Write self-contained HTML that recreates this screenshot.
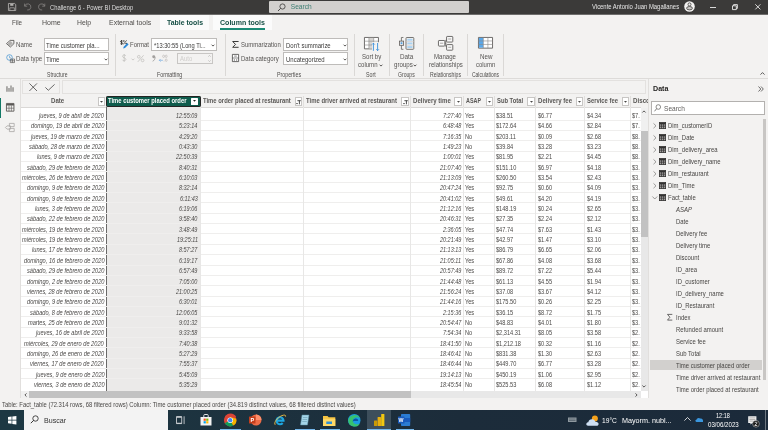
<!DOCTYPE html>
<html><head><meta charset="utf-8">
<style>
*{box-sizing:border-box;margin:0;padding:0}
html,body{width:768px;height:430px;overflow:hidden;background:#f3f2f1;font-family:"Liberation Sans",sans-serif;color:#252423}
.a{position:absolute}
.t{position:absolute;white-space:nowrap;line-height:1;transform-origin:0 0}
svg{position:absolute;overflow:visible}
</style></head><body><div id="root" style="position:absolute;left:0;top:0;width:768px;height:430px;will-change:transform">
<div class="a" style="left:0;top:0;width:768px;height:14px;background:#3b3a39"></div>
<div class="a" style="left:0;top:14px;width:768px;height:1px;background:#6e6d6c"></div>
<svg style="left:7.8px;top:2.9px" width="8.2" height="8" viewBox="0 0 8.2 8"><path d="M0.45 0.45h6.2l1.1 1.1v6H0.45z" fill="none" stroke="#b3b1af" stroke-width="0.85"/><rect x="2.2" y="0.9" width="3.2" height="1.9" fill="#b3b1af"/><path d="M1.8 7.5V4.8h4.6v2.7" fill="none" stroke="#b3b1af" stroke-width="0.7"/></svg>
<svg style="left:23.8px;top:3px" width="7.4" height="7.4" viewBox="0 0 7.4 7.4"><path d="M0.6 0.6v2.6h2.6 M0.8 3.1A3.1 3.1 0 1 1 3.2 7" fill="none" stroke="#8a8886" stroke-width="0.75"/></svg>
<svg style="left:38.3px;top:3px" width="7.4" height="7.4" viewBox="0 0 7.4 7.4"><path d="M6.8 0.6v2.6H4.2 M6.6 3.1A3.1 3.1 0 1 0 4.2 7" fill="none" stroke="#8a8886" stroke-width="0.75"/></svg>
<div class="t" style="left:50.00px;top:4.81px;font-size:6.6px;color:#dcdcdc;transform:scaleX(0.8867);">Challenge 6 - Power BI Desktop</div>
<div class="a" style="left:268.8px;top:1px;width:200px;height:12px;background:#d2d0ce;border-radius:1px"></div>
<svg style="left:277px;top:3px" width="9" height="9" viewBox="0 0 9 9"><circle cx="5.5" cy="3.5" r="2.6" fill="none" stroke="#3b3a39" stroke-width="0.8"/><path d="M3.6 5.4L1 8" stroke="#3b3a39" stroke-width="0.9"/></svg>
<div class="t" style="left:290.80px;top:4.01px;font-size:6.6px;color:#3c7d72;">Search</div>
<div class="t" style="left:591.70px;top:4.00px;font-size:6.5px;color:#e8e8e8;transform:scaleX(0.9071);">Vicente Antonio Juan Magallanes</div>
<svg style="left:684.3px;top:1.3px" width="11" height="11" viewBox="0 0 11 11"><circle cx="5.5" cy="5.5" r="5.3" fill="#f3f2f1"/><circle cx="5.5" cy="3.4" r="1.5" fill="none" stroke="#3b3a39" stroke-width="0.8"/><ellipse cx="5.5" cy="7.2" rx="2.9" ry="1.7" fill="#c8c6c4" stroke="#3b3a39" stroke-width="0.8"/></svg>
<div class="a" style="left:710.3px;top:7.1px;width:5.8px;height:0.9px;background:#d8d8d8"></div>
<svg style="left:732.4px;top:4px" width="6" height="6" viewBox="0 0 6 6"><path d="M0.5 1.8h3.8v3.8H0.5z M1.6 1.8V0.6h3.8v3.8H4.3" fill="none" stroke="#fff" stroke-width="0.8"/></svg>
<svg style="left:755px;top:4.3px" width="6" height="6" viewBox="0 0 6 6"><path d="M0.3 0.3L5.4 5.4 M5.4 0.3L0.3 5.4" stroke="#fff" stroke-width="0.8"/></svg>
<div class="a" style="left:160px;top:15px;width:49px;height:14.7px;background:#fbfbfb"></div>
<div class="a" style="left:212.5px;top:15px;width:59.5px;height:14.7px;background:#fbfbfb"></div>
<div class="t" style="left:11.70px;top:20.21px;font-size:6.6px;color:#4f4d4b;transform:scaleX(0.9506);">File</div>
<div class="t" style="left:41.80px;top:20.21px;font-size:6.6px;color:#4f4d4b;transform:scaleX(1.0629);">Home</div>
<div class="t" style="left:76.90px;top:20.21px;font-size:6.6px;color:#4f4d4b;transform:scaleX(1.0396);">Help</div>
<div class="t" style="left:108.60px;top:20.21px;font-size:6.6px;color:#4f4d4b;transform:scaleX(1.0562);">External tools</div>
<div class="t" style="left:167.00px;top:20.20px;font-size:6.5px;color:#164f45;font-weight:700;transform:scaleX(1.0642);">Table tools</div>
<div class="t" style="left:220.00px;top:20.20px;font-size:6.5px;color:#164f45;font-weight:700;transform:scaleX(1.0835);">Column tools</div>
<div class="a" style="left:220px;top:28.4px;width:45px;height:1.3px;background:#1b8a75"></div>
<div class="a" style="left:0;top:78.1px;width:768px;height:0.9px;background:#dddbd9"></div>
<div class="a" style="left:114.6px;top:33.5px;width:0.7px;height:42px;background:#dad8d6"></div>
<div class="a" style="left:225.2px;top:33.5px;width:0.7px;height:42px;background:#dad8d6"></div>
<div class="a" style="left:353.7px;top:33.5px;width:0.7px;height:42px;background:#dad8d6"></div>
<div class="a" style="left:388.5px;top:33.5px;width:0.7px;height:42px;background:#dad8d6"></div>
<div class="a" style="left:423.3px;top:33.5px;width:0.7px;height:42px;background:#dad8d6"></div>
<div class="a" style="left:467.4px;top:33.5px;width:0.7px;height:42px;background:#dad8d6"></div>
<div class="a" style="left:503.1px;top:33.5px;width:0.7px;height:42px;background:#dad8d6"></div>
<div class="t" style="left:46.90px;top:71.67px;font-size:6.3px;color:#4f4d4b;transform:scaleX(0.8059);">Structure</div>
<div class="t" style="left:156.90px;top:71.67px;font-size:6.3px;color:#4f4d4b;transform:scaleX(0.8403);">Formatting</div>
<div class="t" style="left:277.00px;top:71.67px;font-size:6.3px;color:#4f4d4b;transform:scaleX(0.8396);">Properties</div>
<div class="t" style="left:366.25px;top:71.67px;font-size:6.3px;color:#4f4d4b;transform:scaleX(0.8432);">Sort</div>
<div class="t" style="left:398.30px;top:71.67px;font-size:6.3px;color:#4f4d4b;transform:scaleX(0.8085);">Groups</div>
<div class="t" style="left:429.80px;top:71.67px;font-size:6.3px;color:#4f4d4b;transform:scaleX(0.8198);">Relationships</div>
<div class="t" style="left:471.90px;top:71.67px;font-size:6.3px;color:#4f4d4b;transform:scaleX(0.7898);">Calculations</div>
<svg style="left:5.8px;top:40.2px" width="8.4" height="7.4" viewBox="0 0 8.4 7.4"><path d="M0.5 3.6L4.2 0.4H7.9V3.7L4.4 7z" fill="none" stroke="#3b3a39" stroke-width="0.75"/><path d="M2 3.1l2.6 2.5 M3.1 2.1l2.6 2.5 M4.2 1.1l2.6 2.5 M2.4 4.6l2.6-2.5 M3.5 5.6l2.6-2.5" stroke="#5a5856" stroke-width="0.45"/></svg>
<div class="t" style="left:15.60px;top:41.91px;font-size:6.6px;color:#565452;transform:scaleX(0.9321);">Name</div>
<svg style="left:6px;top:54px" width="9" height="9" viewBox="0 0 9 9"><circle cx="3.5" cy="3.5" r="2.8" fill="none" stroke="#3b8fd1" stroke-width="0.7"/><path d="M3.5 1.8v1.9h1.3" fill="none" stroke="#3b8fd1" stroke-width="0.6"/><path d="M4.3 5h4.2v3.6H4.3z M4.3 6.8h4.2 M6.4 5v3.6" fill="none" stroke="#484644" stroke-width="0.6"/></svg>
<div class="t" style="left:15.60px;top:56.21px;font-size:6.6px;color:#565452;transform:scaleX(0.9315);">Data type</div>
<div class="a" style="left:44.2px;top:38.2px;width:64.8px;height:12.6px;background:#fff;border:0.75px solid #bebcba"></div>
<div class="t" style="left:46.40px;top:42.61px;font-size:6.6px;color:#3b3a39;transform:scaleX(0.9011);">Time customer pla...</div>
<div class="a" style="left:44.2px;top:52.1px;width:64.8px;height:12.5px;background:#fff;border:0.75px solid #bebcba"></div>
<div class="t" style="left:46.40px;top:56.51px;font-size:6.6px;color:#3b3a39;transform:scaleX(0.9361);">Time</div>
<svg style="left:103.5px;top:57.6px" width="4" height="3" viewBox="0 0 4 3"><path d="M0.6 0.7L2 2.1 3.4 0.7" fill="none" stroke="#484644" stroke-width="0.9"/></svg>
<svg style="left:119.6px;top:40.4px" width="9" height="9" viewBox="0 0 9 9"><path d="M2.6 1.1C2.1 0.6 0.5 0.6 0.5 1.6 0.5 2.6 2.7 2.3 2.7 3.4 2.7 4.3 1 4.3 0.4 3.7 M1.55 0v4.8" fill="none" stroke="#252423" stroke-width="0.75"/><path d="M3.4 4.4L6.6 0.3" stroke="#252423" stroke-width="0.7"/><circle cx="3.9" cy="1.1" r="0.75" fill="#252423"/><circle cx="6.1" cy="3.6" r="0.75" fill="#252423"/><path d="M3.2 8.4l0.5-1.7 3.6-3.6 1.3 1.3-3.6 3.6z" fill="#2b88d8"/></svg>
<div class="t" style="left:130.00px;top:41.91px;font-size:6.6px;color:#565452;transform:scaleX(0.9095);">Format</div>
<div class="a" style="left:151.4px;top:38.2px;width:65.2px;height:12.6px;background:#fff;border:0.75px solid #bebcba"></div>
<div class="t" style="left:153.80px;top:42.71px;font-size:6.6px;color:#3b3a39;transform:scaleX(0.8671);">*13:30:55 (Long Ti...</div>
<svg style="left:211px;top:43.6px" width="4" height="3" viewBox="0 0 4 3"><path d="M0.6 0.7L2 2.1 3.4 0.7" fill="none" stroke="#484644" stroke-width="0.9"/></svg>
<svg style="left:121.8px;top:54.4px" width="4.4" height="7.8" viewBox="0 0 4.4 7.8"><path d="M3.9 1.9C3.6 1.2 2.9 1 2.2 1 1.2 1 0.5 1.6 0.5 2.3 0.5 4 3.9 3.6 3.9 5.4 3.9 6.2 3.1 6.8 2.1 6.8 1.3 6.8 0.6 6.5 0.4 5.8 M2.2 0v7.8" fill="none" stroke="#c0bebc" stroke-width="0.75"/></svg>
<svg style="left:131px;top:58.3px" width="4" height="3" viewBox="0 0 4 3"><path d="M0.6 0.7L2 2.1 3.4 0.7" fill="none" stroke="#c8c6c4" stroke-width="0.9"/></svg>
<svg style="left:137.3px;top:54.8px" width="7.4" height="7.2" viewBox="0 0 7.4 7.2"><circle cx="1.8" cy="1.8" r="1.35" fill="none" stroke="#c0bebc" stroke-width="0.75"/><circle cx="5.6" cy="5.4" r="1.35" fill="none" stroke="#c0bebc" stroke-width="0.75"/><path d="M6.6 0.3L0.8 6.9" stroke="#c0bebc" stroke-width="0.75"/></svg>
<svg style="left:151.6px;top:55.3px" width="3.6" height="6.4" viewBox="0 0 3.6 6.4"><circle cx="1.7" cy="1.7" r="1.45" fill="#a19f9d"/><path d="M3.1 1.8C3.1 4 2.4 5.4 0.7 6.2" fill="none" stroke="#a19f9d" stroke-width="0.95"/></svg>
<svg style="left:159px;top:54.8px" width="8.5" height="7" viewBox="0 0 8.5 7"><ellipse cx="4.6" cy="1.3" rx="0.95" ry="1.2" fill="none" stroke="#b3b1af" stroke-width="0.55"/><ellipse cx="7.2" cy="1.3" rx="0.95" ry="1.2" fill="none" stroke="#b3b1af" stroke-width="0.55"/><ellipse cx="7.2" cy="5.2" rx="0.95" ry="1.2" fill="none" stroke="#b3b1af" stroke-width="0.55"/><circle cx="5" cy="6.1" r="0.4" fill="#b3b1af"/><path d="M0.3 5.3h3.6 M1.6 4l-1.3 1.3 1.3 1.3" fill="none" stroke="#6aa6de" stroke-width="0.65"/></svg>
<div class="a" style="left:177.2px;top:53.1px;width:35.8px;height:11.1px;background:#f3f2f1;border:0.75px solid #c8c6c4"></div>
<div class="t" style="left:179.80px;top:56.11px;font-size:6.6px;color:#cfcdcb;transform:scaleX(0.8985);">Auto</div>
<svg style="left:208px;top:55px" width="3" height="7" viewBox="0 0 3 7"><path d="M0.3 1.6L1.5 0.5 2.7 1.6 M0.3 5.4L1.5 6.5 2.7 5.4" fill="none" stroke="#a19f9d" stroke-width="0.55"/></svg>
<svg style="left:231.8px;top:41px" width="6.8" height="6.8" viewBox="0 0 6.8 6.8"><path d="M6.6 0.5H0.7L3.5 3.4 0.7 6.3H6.6" fill="none" stroke="#252423" stroke-width="0.9"/></svg>
<div class="t" style="left:241.00px;top:41.91px;font-size:6.6px;color:#565452;transform:scaleX(0.9026);">Summarization</div>
<svg style="left:232px;top:54px" width="7" height="8" viewBox="0 0 7 8"><path d="M0.4 0.4h6.2v7.2H0.4z" fill="#fff" stroke="#3b3a39" stroke-width="0.75"/><path d="M0.4 4h6.2 M2.2 2.1h2.6" fill="none" stroke="#3b3a39" stroke-width="0.6"/><path d="M1.8 5.4h1.2v1.1H1.8z M4 5.4h1.2v1.1H4z" fill="#5a5856"/></svg>
<div class="t" style="left:241.00px;top:56.21px;font-size:6.6px;color:#565452;transform:scaleX(0.9181);">Data category</div>
<div class="a" style="left:283.3px;top:38.3px;width:64.3px;height:12.3px;background:#fff;border:0.75px solid #bebcba"></div>
<div class="t" style="left:285.60px;top:42.71px;font-size:6.6px;color:#3b3a39;transform:scaleX(0.9073);">Don't summarize</div>
<svg style="left:343px;top:43.6px" width="4" height="3" viewBox="0 0 4 3"><path d="M0.6 0.7L2 2.1 3.4 0.7" fill="none" stroke="#484644" stroke-width="0.9"/></svg>
<div class="a" style="left:283.3px;top:52.1px;width:64.3px;height:12.5px;background:#fff;border:0.75px solid #bebcba"></div>
<div class="t" style="left:285.60px;top:56.61px;font-size:6.6px;color:#3b3a39;transform:scaleX(0.9099);">Uncategorized</div>
<svg style="left:343px;top:57.6px" width="4" height="3" viewBox="0 0 4 3"><path d="M0.6 0.7L2 2.1 3.4 0.7" fill="none" stroke="#484644" stroke-width="0.9"/></svg>
<svg style="left:364px;top:37px" width="15" height="14" viewBox="0 0 15 14"><path d="M0.45 0.45h14v11.4h-14z" fill="#fff" stroke="#605e5c" stroke-width="0.9"/><rect x="4.9" y="0.9" width="4.8" height="10.6" fill="#d6d4d2"/><path d="M0.45 4.2h14 M0.45 8h14 M4.9 0.45v11.4 M9.7 0.45v11.4" fill="none" stroke="#8a8886" stroke-width="0.6"/><rect x="8" y="5.2" width="7" height="8.8" fill="#f3f2f1"/><path d="M9.4 13.8V6.2 M8.1 7.5L9.4 6.2 10.7 7.5 M13.6 6v7.6 M12.3 12.3l1.3 1.3 1.3-1.3" fill="none" stroke="#2b88d8" stroke-width="0.85"/></svg>
<div class="t" style="left:361.50px;top:54.01px;font-size:6.6px;color:#565452;transform:scaleX(0.9239);">Sort by</div>
<div class="t" style="left:358.30px;top:62.41px;font-size:6.6px;color:#565452;transform:scaleX(0.9170);">column</div>
<svg style="left:378.5px;top:64.3px" width="4" height="3" viewBox="0 0 4 3"><path d="M0.6 0.7L2 2.1 3.4 0.7" fill="none" stroke="#484644" stroke-width="0.9"/></svg>
<svg style="left:399px;top:36.6px" width="15.5" height="12.8" viewBox="0 0 15.5 12.8"><path d="M4.4 0.5H2.4V12.3H4.4" fill="none" stroke="#605e5c" stroke-width="0.8"/><rect x="0.4" y="4.1" width="4.2" height="4.2" fill="#f3f2f1" stroke="#605e5c" stroke-width="0.8"/><rect x="1.6" y="5.3" width="1.8" height="1.8" fill="#4f9fe0"/><rect x="7" y="0.5" width="7.8" height="11.8" rx="0.8" fill="none" stroke="#605e5c" stroke-width="0.85"/><rect x="8.3" y="1.8" width="5.2" height="1.9" fill="#a9d3f2"/><rect x="8.3" y="5.45" width="5.2" height="1.9" fill="#a9d3f2"/><rect x="8.3" y="9.1" width="5.2" height="1.9" fill="#a9d3f2"/><path d="M7 4.55h7.8 M7 8.2h7.8" stroke="#c8c6c4" stroke-width="0.6"/></svg>
<div class="t" style="left:399.60px;top:54.01px;font-size:6.6px;color:#565452;transform:scaleX(0.9614);">Data</div>
<div class="t" style="left:393.75px;top:62.41px;font-size:6.6px;color:#565452;transform:scaleX(0.9320);">groups</div>
<svg style="left:413.3px;top:64.3px" width="4" height="3" viewBox="0 0 4 3"><path d="M0.6 0.7L2 2.1 3.4 0.7" fill="none" stroke="#484644" stroke-width="0.9"/></svg>
<svg style="left:438px;top:35.9px" width="15.2" height="14.6" viewBox="0 0 15.2 14.6"><rect x="8.6" y="0.45" width="6.2" height="5.6" rx="0.6" fill="#f8f8f8" stroke="#605e5c" stroke-width="0.9"/><rect x="0.45" y="4.5" width="6.4" height="5.6" rx="0.6" fill="#f8f8f8" stroke="#605e5c" stroke-width="0.9"/><rect x="8.6" y="8.6" width="6.2" height="5.6" rx="0.6" fill="#f8f8f8" stroke="#605e5c" stroke-width="0.9"/><path d="M6.9 7.3H7.8 M7.8 4.2v6.2 M7.8 4.2h0.8 M7.8 10.4h0.8" fill="none" stroke="#605e5c" stroke-width="0.8"/><path d="M10.2 3h3 M2 7.2h3.2 M10.2 11.3h3" stroke="#a19f9d" stroke-width="0.9"/></svg>
<div class="t" style="left:434.40px;top:54.01px;font-size:6.6px;color:#565452;transform:scaleX(0.9185);">Manage</div>
<div class="t" style="left:428.75px;top:62.41px;font-size:6.6px;color:#565452;transform:scaleX(0.9114);">relationships</div>
<svg style="left:478px;top:37.3px" width="15" height="11.6" viewBox="0 0 15 11.6"><path d="M0.45 0.45h14.1v10.7H0.45z" fill="#fff" stroke="#605e5c" stroke-width="0.9"/><rect x="0.9" y="0.9" width="4.4" height="9.8" fill="#5aa8ea"/><path d="M0.45 3.95h14.1 M0.45 7.45h14.1 M5.3 0.45v10.7 M9.9 0.45v10.7" fill="none" stroke="#8a8886" stroke-width="0.6"/></svg>
<div class="t" style="left:479.60px;top:54.01px;font-size:6.6px;color:#565452;transform:scaleX(0.9392);">New</div>
<div class="t" style="left:476.00px;top:62.41px;font-size:6.6px;color:#565452;transform:scaleX(0.9029);">column</div>
<svg style="left:759.8px;top:71.8px" width="5" height="3" viewBox="0 0 5 3"><path d="M0.5 2.6L2.5 0.6 4.5 2.6" fill="none" stroke="#323130" stroke-width="0.8"/></svg>
<div class="a" style="left:20.3px;top:79px;width:0.8px;height:319px;background:#e1dfdd"></div>
<div class="a" style="left:0;top:97.8px;width:1.3px;height:19.9px;background:#117865"></div>
<svg style="left:6px;top:85px" width="8" height="6.8" viewBox="0 0 8 6.8"><path d="M0 6.8V1.2h1.9v5.6z M2.1 6.8V3h1.8v3.8z M4.1 6.8V0.4h1.8v6.4z M6.1 6.8V2.2H8v4.6z" fill="#a8a6a4"/></svg>
<svg style="left:6px;top:103.4px" width="8.4" height="8.6" viewBox="0 0 8.4 8.6"><path d="M0.45 0.45h7.5v7.7H0.45z" fill="none" stroke="#5a5856" stroke-width="0.9"/><path d="M0.45 1.7h7.5" stroke="#5a5856" stroke-width="1.6"/><path d="M3 2.4v5.8 M5.4 2.4v5.8 M0.45 5.2h7.5" stroke="#5a5856" stroke-width="0.6"/></svg>
<svg style="left:5.4px;top:123.2px" width="9.6" height="9" viewBox="0 0 9.6 9"><path d="M4.4 0.4h4.8v3.2H4.4z M4.4 5.4h4.8v3.2H4.4z M2 2.9h3.5v3.2H2L0.4 4.5z" fill="none" stroke="#a8a6a4" stroke-width="0.8"/></svg>
<div class="a" style="left:22.2px;top:79.9px;width:38.2px;height:13.7px;border:0.7px solid #e3e1df;background:#f3f2f1"></div>
<svg style="left:29px;top:83.3px" width="8.4" height="8.4" viewBox="0 0 8.4 8.4"><path d="M0.4 0.4L8 8 M8 0.4L0.4 8" stroke="#3b3a39" stroke-width="0.75"/></svg>
<svg style="left:44.5px;top:84px" width="10" height="6.8" viewBox="0 0 10 6.8"><path d="M0.4 3.4L3.3 6.3 9.6 0.4" fill="none" stroke="#3b3a39" stroke-width="0.75"/></svg>
<div class="a" style="left:62.3px;top:79.9px;width:583.3px;height:13.7px;border:0.7px solid #e3e1df;background:#f3f2f1"></div>
<div class="a" style="left:21.2px;top:96.2px;width:619.8px;height:295px;background:#fff"></div>
<div class="a" style="left:21.2px;top:96.2px;width:619.8px;height:10.6px;background:#f3f2f1"></div>
<div class="a" style="left:21.2px;top:106.8px;width:619.8px;height:0.8px;background:#dad8d6"></div>
<div class="a" style="left:106.4px;top:107px;width:94.6px;height:284px;background:#ebeae9;border-left:0.9px solid #6a6968;border-right:0.9px solid #8a8886"></div>
<div class="a" style="left:21.2px;top:119.60px;width:619.8px;height:0.7px;background:#efeeed"></div>
<div class="a" style="left:21.2px;top:129.95px;width:619.8px;height:0.7px;background:#efeeed"></div>
<div class="a" style="left:21.2px;top:140.30px;width:619.8px;height:0.7px;background:#efeeed"></div>
<div class="a" style="left:21.2px;top:150.65px;width:619.8px;height:0.7px;background:#efeeed"></div>
<div class="a" style="left:21.2px;top:161.00px;width:619.8px;height:0.7px;background:#efeeed"></div>
<div class="a" style="left:21.2px;top:171.35px;width:619.8px;height:0.7px;background:#efeeed"></div>
<div class="a" style="left:21.2px;top:181.70px;width:619.8px;height:0.7px;background:#efeeed"></div>
<div class="a" style="left:21.2px;top:192.05px;width:619.8px;height:0.7px;background:#efeeed"></div>
<div class="a" style="left:21.2px;top:202.40px;width:619.8px;height:0.7px;background:#efeeed"></div>
<div class="a" style="left:21.2px;top:212.75px;width:619.8px;height:0.7px;background:#efeeed"></div>
<div class="a" style="left:21.2px;top:223.10px;width:619.8px;height:0.7px;background:#efeeed"></div>
<div class="a" style="left:21.2px;top:233.45px;width:619.8px;height:0.7px;background:#efeeed"></div>
<div class="a" style="left:21.2px;top:243.80px;width:619.8px;height:0.7px;background:#efeeed"></div>
<div class="a" style="left:21.2px;top:254.15px;width:619.8px;height:0.7px;background:#efeeed"></div>
<div class="a" style="left:21.2px;top:264.50px;width:619.8px;height:0.7px;background:#efeeed"></div>
<div class="a" style="left:21.2px;top:274.85px;width:619.8px;height:0.7px;background:#efeeed"></div>
<div class="a" style="left:21.2px;top:285.20px;width:619.8px;height:0.7px;background:#efeeed"></div>
<div class="a" style="left:21.2px;top:295.55px;width:619.8px;height:0.7px;background:#efeeed"></div>
<div class="a" style="left:21.2px;top:305.90px;width:619.8px;height:0.7px;background:#efeeed"></div>
<div class="a" style="left:21.2px;top:316.25px;width:619.8px;height:0.7px;background:#efeeed"></div>
<div class="a" style="left:21.2px;top:326.60px;width:619.8px;height:0.7px;background:#efeeed"></div>
<div class="a" style="left:21.2px;top:336.95px;width:619.8px;height:0.7px;background:#efeeed"></div>
<div class="a" style="left:21.2px;top:347.30px;width:619.8px;height:0.7px;background:#efeeed"></div>
<div class="a" style="left:21.2px;top:357.65px;width:619.8px;height:0.7px;background:#efeeed"></div>
<div class="a" style="left:21.2px;top:368.00px;width:619.8px;height:0.7px;background:#efeeed"></div>
<div class="a" style="left:21.2px;top:378.35px;width:619.8px;height:0.7px;background:#efeeed"></div>
<div class="a" style="left:200.15px;top:107px;width:0.7px;height:284px;background:#e8e7e6"></div>
<div class="a" style="left:303.25px;top:107px;width:0.7px;height:284px;background:#e8e7e6"></div>
<div class="a" style="left:410.25px;top:107px;width:0.7px;height:284px;background:#e8e7e6"></div>
<div class="a" style="left:462.95px;top:107px;width:0.7px;height:284px;background:#e8e7e6"></div>
<div class="a" style="left:494.04999999999995px;top:107px;width:0.7px;height:284px;background:#e8e7e6"></div>
<div class="a" style="left:535.15px;top:107px;width:0.7px;height:284px;background:#e8e7e6"></div>
<div class="a" style="left:584.35px;top:107px;width:0.7px;height:284px;background:#e8e7e6"></div>
<div class="a" style="left:630.25px;top:107px;width:0.7px;height:284px;background:#e8e7e6"></div>
<div class="a" style="left:200.15px;top:96.2px;width:0.7px;height:10.6px;background:#e1dfdd"></div>
<div class="a" style="left:303.25px;top:96.2px;width:0.7px;height:10.6px;background:#e1dfdd"></div>
<div class="a" style="left:410.25px;top:96.2px;width:0.7px;height:10.6px;background:#e1dfdd"></div>
<div class="a" style="left:462.95px;top:96.2px;width:0.7px;height:10.6px;background:#e1dfdd"></div>
<div class="a" style="left:494.04999999999995px;top:96.2px;width:0.7px;height:10.6px;background:#e1dfdd"></div>
<div class="a" style="left:535.15px;top:96.2px;width:0.7px;height:10.6px;background:#e1dfdd"></div>
<div class="a" style="left:584.35px;top:96.2px;width:0.7px;height:10.6px;background:#e1dfdd"></div>
<div class="a" style="left:630.25px;top:96.2px;width:0.7px;height:10.6px;background:#e1dfdd"></div>
<div class="t" style="left:51.30px;top:98.41px;font-size:6.6px;color:#5a5856;font-weight:700;transform:scaleX(0.9233);">Date</div>
<div class="a" style="left:97.69999999999999px;top:97.3px;width:7.4px;height:8.4px;background:#fff;border:0.6px solid #c8c6c4"></div><svg style="left:99.89999999999999px;top:100.7px" width="3" height="2" viewBox="0 0 3 2"><path d="M0 0h3L1.5 1.8z" fill="#484644"/></svg>
<div class="a" style="left:106.4px;top:96.3px;width:94.2px;height:10.3px;background:#0e5c4c;border-radius:1.2px;border:0.6px solid #252423"></div>
<div class="t" style="left:108.40px;top:98.41px;font-size:6.6px;color:#ffffff;font-weight:700;transform:scaleX(0.8900);">Time customer placed order</div>
<div class="a" style="left:190.8px;top:97.9px;width:7.5px;height:6.8px;background:#fff;border-radius:0.5px"></div>
<svg style="left:193px;top:100.4px" width="3" height="2" viewBox="0 0 3 2"><path d="M0 0h3L1.5 1.8z" fill="#252423"/></svg>
<div class="t" style="left:202.50px;top:98.41px;font-size:6.6px;color:#5a5856;font-weight:700;transform:scaleX(0.8918);">Time order placed at restaurant</div>
<div class="a" style="left:294.6px;top:97.3px;width:7.4px;height:8.4px;background:#fff;border:0.6px solid #c8c6c4"></div><svg style="left:295.9px;top:99.6px" width="5" height="4.5" viewBox="0 0 5 4.5"><path d="M1.4 0.7h3.4 M3.4 0.7V4.3 M0.2 3.6h1.6" fill="none" stroke="#252423" stroke-width="0.8"/></svg>
<div class="t" style="left:306.00px;top:98.41px;font-size:6.6px;color:#5a5856;font-weight:700;transform:scaleX(0.8997);">Time driver arrived at restaurant</div>
<div class="a" style="left:401.20000000000005px;top:97.3px;width:7.4px;height:8.4px;background:#fff;border:0.6px solid #c8c6c4"></div><svg style="left:402.5px;top:99.6px" width="5" height="4.5" viewBox="0 0 5 4.5"><path d="M1.4 0.7h3.4 M3.4 0.7V4.3 M0.2 3.6h1.6" fill="none" stroke="#252423" stroke-width="0.8"/></svg>
<div class="t" style="left:412.80px;top:98.41px;font-size:6.6px;color:#5a5856;font-weight:700;transform:scaleX(0.9205);">Delivery time</div>
<div class="a" style="left:454.3px;top:97.3px;width:7.4px;height:8.4px;background:#fff;border:0.6px solid #c8c6c4"></div><svg style="left:456.5px;top:100.7px" width="3" height="2" viewBox="0 0 3 2"><path d="M0 0h3L1.5 1.8z" fill="#484644"/></svg>
<div class="t" style="left:466.00px;top:98.41px;font-size:6.6px;color:#5a5856;font-weight:700;transform:scaleX(0.8184);">ASAP</div>
<div class="a" style="left:485.6px;top:97.3px;width:7.4px;height:8.4px;background:#fff;border:0.6px solid #c8c6c4"></div><svg style="left:487.8px;top:100.7px" width="3" height="2" viewBox="0 0 3 2"><path d="M0 0h3L1.5 1.8z" fill="#484644"/></svg>
<div class="t" style="left:496.90px;top:98.41px;font-size:6.6px;color:#5a5856;font-weight:700;transform:scaleX(0.8833);">Sub Total</div>
<div class="a" style="left:527.3000000000001px;top:97.3px;width:7.4px;height:8.4px;background:#fff;border:0.6px solid #c8c6c4"></div><svg style="left:529.5px;top:100.7px" width="3" height="2" viewBox="0 0 3 2"><path d="M0 0h3L1.5 1.8z" fill="#484644"/></svg>
<div class="t" style="left:537.90px;top:98.41px;font-size:6.6px;color:#5a5856;font-weight:700;transform:scaleX(0.9208);">Delivery fee</div>
<div class="a" style="left:575.6px;top:97.3px;width:7.4px;height:8.4px;background:#fff;border:0.6px solid #c8c6c4"></div><svg style="left:577.8px;top:100.7px" width="3" height="2" viewBox="0 0 3 2"><path d="M0 0h3L1.5 1.8z" fill="#484644"/></svg>
<div class="t" style="left:587.00px;top:98.41px;font-size:6.6px;color:#5a5856;font-weight:700;transform:scaleX(0.8872);">Service fee</div>
<div class="a" style="left:621.6px;top:97.3px;width:7.4px;height:8.4px;background:#fff;border:0.6px solid #c8c6c4"></div><svg style="left:623.8px;top:100.7px" width="3" height="2" viewBox="0 0 3 2"><path d="M0 0h3L1.5 1.8z" fill="#484644"/></svg>
<div class="a" style="left:630.6px;top:96.2px;width:17px;height:11px;overflow:hidden">
<div class="t" style="left:2.00px;top:2.21px;font-size:6.6px;color:#5a5856;font-weight:700;transform:scaleX(0.9391);">Discount</div>
</div>
<div class="t" style="left:39.28px;top:112.81px;font-size:6.6px;color:#4a4846;font-style:italic;transform:scaleX(0.8595);">jueves, 9 de abril de 2020</div>
<div class="t" style="left:176.15px;top:112.81px;font-size:6.6px;color:#4a4846;font-style:italic;transform:scaleX(0.8318);">12:55:09</div>
<div class="t" style="left:442.70px;top:112.81px;font-size:6.6px;color:#4a4846;font-style:italic;transform:scaleX(0.8318);">7:27:40</div>
<div class="t" style="left:465.30px;top:112.81px;font-size:6.6px;color:#4a4846;transform:scaleX(0.8503);">Yes</div>
<div class="t" style="left:496.00px;top:112.81px;font-size:6.6px;color:#4a4846;transform:scaleX(0.8503);">$38.51</div>
<div class="t" style="left:537.50px;top:112.81px;font-size:6.6px;color:#4a4846;transform:scaleX(0.8503);">$6.77</div>
<div class="t" style="left:587.00px;top:112.81px;font-size:6.6px;color:#4a4846;transform:scaleX(0.8503);">$4.34</div>
<div class="t" style="left:30.78px;top:123.17px;font-size:6.6px;color:#4a4846;font-style:italic;transform:scaleX(0.8595);">domingo, 19 de abril de 2020</div>
<div class="t" style="left:179.20px;top:123.17px;font-size:6.6px;color:#4a4846;font-style:italic;transform:scaleX(0.8318);">5:23:14</div>
<div class="t" style="left:442.70px;top:123.17px;font-size:6.6px;color:#4a4846;font-style:italic;transform:scaleX(0.8318);">6:48:48</div>
<div class="t" style="left:465.30px;top:123.17px;font-size:6.6px;color:#4a4846;transform:scaleX(0.8503);">Yes</div>
<div class="t" style="left:496.00px;top:123.17px;font-size:6.6px;color:#4a4846;transform:scaleX(0.8503);">$172.64</div>
<div class="t" style="left:537.50px;top:123.17px;font-size:6.6px;color:#4a4846;transform:scaleX(0.8503);">$4.66</div>
<div class="t" style="left:587.00px;top:123.17px;font-size:6.6px;color:#4a4846;transform:scaleX(0.8503);">$2.84</div>
<div class="t" style="left:31.10px;top:133.53px;font-size:6.6px;color:#4a4846;font-style:italic;transform:scaleX(0.8595);">jueves, 19 de marzo de 2020</div>
<div class="t" style="left:179.20px;top:133.53px;font-size:6.6px;color:#4a4846;font-style:italic;transform:scaleX(0.8318);">4:29:20</div>
<div class="t" style="left:442.70px;top:133.53px;font-size:6.6px;color:#4a4846;font-style:italic;transform:scaleX(0.8318);">7:16:35</div>
<div class="t" style="left:465.30px;top:133.53px;font-size:6.6px;color:#4a4846;transform:scaleX(0.8503);">No</div>
<div class="t" style="left:496.00px;top:133.53px;font-size:6.6px;color:#4a4846;transform:scaleX(0.8503);">$203.11</div>
<div class="t" style="left:537.50px;top:133.53px;font-size:6.6px;color:#4a4846;transform:scaleX(0.8503);">$0.09</div>
<div class="t" style="left:587.00px;top:133.53px;font-size:6.6px;color:#4a4846;transform:scaleX(0.8503);">$2.68</div>
<div class="t" style="left:28.88px;top:143.89px;font-size:6.6px;color:#4a4846;font-style:italic;transform:scaleX(0.8595);">sábado, 28 de marzo de 2020</div>
<div class="t" style="left:179.20px;top:143.89px;font-size:6.6px;color:#4a4846;font-style:italic;transform:scaleX(0.8318);">0:43:30</div>
<div class="t" style="left:442.70px;top:143.89px;font-size:6.6px;color:#4a4846;font-style:italic;transform:scaleX(0.8318);">1:49:23</div>
<div class="t" style="left:465.30px;top:143.89px;font-size:6.6px;color:#4a4846;transform:scaleX(0.8503);">No</div>
<div class="t" style="left:496.00px;top:143.89px;font-size:6.6px;color:#4a4846;transform:scaleX(0.8503);">$39.84</div>
<div class="t" style="left:537.50px;top:143.89px;font-size:6.6px;color:#4a4846;transform:scaleX(0.8503);">$3.28</div>
<div class="t" style="left:587.00px;top:143.89px;font-size:6.6px;color:#4a4846;transform:scaleX(0.8503);">$3.23</div>
<div class="t" style="left:37.07px;top:154.25px;font-size:6.6px;color:#4a4846;font-style:italic;transform:scaleX(0.8595);">lunes, 9 de marzo de 2020</div>
<div class="t" style="left:176.15px;top:154.25px;font-size:6.6px;color:#4a4846;font-style:italic;transform:scaleX(0.8318);">22:50:39</div>
<div class="t" style="left:442.70px;top:154.25px;font-size:6.6px;color:#4a4846;font-style:italic;transform:scaleX(0.8318);">1:00:01</div>
<div class="t" style="left:465.30px;top:154.25px;font-size:6.6px;color:#4a4846;transform:scaleX(0.8503);">Yes</div>
<div class="t" style="left:496.00px;top:154.25px;font-size:6.6px;color:#4a4846;transform:scaleX(0.8503);">$81.95</div>
<div class="t" style="left:537.50px;top:154.25px;font-size:6.6px;color:#4a4846;transform:scaleX(0.8503);">$2.21</div>
<div class="t" style="left:587.00px;top:154.25px;font-size:6.6px;color:#4a4846;transform:scaleX(0.8503);">$4.45</div>
<div class="t" style="left:26.67px;top:164.61px;font-size:6.6px;color:#4a4846;font-style:italic;transform:scaleX(0.8595);">sábado, 29 de febrero de 2020</div>
<div class="t" style="left:179.20px;top:164.61px;font-size:6.6px;color:#4a4846;font-style:italic;transform:scaleX(0.8318);">8:40:31</div>
<div class="t" style="left:439.65px;top:164.61px;font-size:6.6px;color:#4a4846;font-style:italic;transform:scaleX(0.8318);">21:07:40</div>
<div class="t" style="left:465.30px;top:164.61px;font-size:6.6px;color:#4a4846;transform:scaleX(0.8503);">Yes</div>
<div class="t" style="left:496.00px;top:164.61px;font-size:6.6px;color:#4a4846;transform:scaleX(0.8503);">$151.10</div>
<div class="t" style="left:537.50px;top:164.61px;font-size:6.6px;color:#4a4846;transform:scaleX(0.8503);">$6.97</div>
<div class="t" style="left:587.00px;top:164.61px;font-size:6.6px;color:#4a4846;transform:scaleX(0.8503);">$4.18</div>
<div class="t" style="left:22.20px;top:174.97px;font-size:6.6px;color:#4a4846;font-style:italic;transform:scaleX(0.8473);">miércoles, 26 de febrero de 2020</div>
<div class="t" style="left:179.20px;top:174.97px;font-size:6.6px;color:#4a4846;font-style:italic;transform:scaleX(0.8318);">6:10:03</div>
<div class="t" style="left:439.65px;top:174.97px;font-size:6.6px;color:#4a4846;font-style:italic;transform:scaleX(0.8318);">21:13:09</div>
<div class="t" style="left:465.30px;top:174.97px;font-size:6.6px;color:#4a4846;transform:scaleX(0.8503);">Yes</div>
<div class="t" style="left:496.00px;top:174.97px;font-size:6.6px;color:#4a4846;transform:scaleX(0.8503);">$260.50</div>
<div class="t" style="left:537.50px;top:174.97px;font-size:6.6px;color:#4a4846;transform:scaleX(0.8503);">$3.54</div>
<div class="t" style="left:587.00px;top:174.97px;font-size:6.6px;color:#4a4846;transform:scaleX(0.8503);">$2.43</div>
<div class="t" style="left:26.68px;top:185.33px;font-size:6.6px;color:#4a4846;font-style:italic;transform:scaleX(0.8595);">domingo, 9 de febrero de 2020</div>
<div class="t" style="left:179.20px;top:185.33px;font-size:6.6px;color:#4a4846;font-style:italic;transform:scaleX(0.8318);">8:32:14</div>
<div class="t" style="left:439.65px;top:185.33px;font-size:6.6px;color:#4a4846;font-style:italic;transform:scaleX(0.8318);">20:47:24</div>
<div class="t" style="left:465.30px;top:185.33px;font-size:6.6px;color:#4a4846;transform:scaleX(0.8503);">Yes</div>
<div class="t" style="left:496.00px;top:185.33px;font-size:6.6px;color:#4a4846;transform:scaleX(0.8503);">$92.75</div>
<div class="t" style="left:537.50px;top:185.33px;font-size:6.6px;color:#4a4846;transform:scaleX(0.8503);">$0.60</div>
<div class="t" style="left:587.00px;top:185.33px;font-size:6.6px;color:#4a4846;transform:scaleX(0.8503);">$4.09</div>
<div class="t" style="left:26.68px;top:195.69px;font-size:6.6px;color:#4a4846;font-style:italic;transform:scaleX(0.8595);">domingo, 9 de febrero de 2020</div>
<div class="t" style="left:179.60px;top:195.69px;font-size:6.6px;color:#4a4846;font-style:italic;transform:scaleX(0.8318);">6:11:43</div>
<div class="t" style="left:439.65px;top:195.69px;font-size:6.6px;color:#4a4846;font-style:italic;transform:scaleX(0.8318);">20:41:02</div>
<div class="t" style="left:465.30px;top:195.69px;font-size:6.6px;color:#4a4846;transform:scaleX(0.8503);">Yes</div>
<div class="t" style="left:496.00px;top:195.69px;font-size:6.6px;color:#4a4846;transform:scaleX(0.8503);">$49.61</div>
<div class="t" style="left:537.50px;top:195.69px;font-size:6.6px;color:#4a4846;transform:scaleX(0.8503);">$4.20</div>
<div class="t" style="left:587.00px;top:195.69px;font-size:6.6px;color:#4a4846;transform:scaleX(0.8503);">$4.19</div>
<div class="t" style="left:34.87px;top:206.05px;font-size:6.6px;color:#4a4846;font-style:italic;transform:scaleX(0.8595);">lunes, 3 de febrero de 2020</div>
<div class="t" style="left:179.20px;top:206.05px;font-size:6.6px;color:#4a4846;font-style:italic;transform:scaleX(0.8318);">6:19:06</div>
<div class="t" style="left:439.65px;top:206.05px;font-size:6.6px;color:#4a4846;font-style:italic;transform:scaleX(0.8318);">21:12:16</div>
<div class="t" style="left:465.30px;top:206.05px;font-size:6.6px;color:#4a4846;transform:scaleX(0.8503);">Yes</div>
<div class="t" style="left:496.00px;top:206.05px;font-size:6.6px;color:#4a4846;transform:scaleX(0.8503);">$148.19</div>
<div class="t" style="left:537.50px;top:206.05px;font-size:6.6px;color:#4a4846;transform:scaleX(0.8503);">$0.24</div>
<div class="t" style="left:587.00px;top:206.05px;font-size:6.6px;color:#4a4846;transform:scaleX(0.8503);">$2.65</div>
<div class="t" style="left:26.67px;top:216.41px;font-size:6.6px;color:#4a4846;font-style:italic;transform:scaleX(0.8595);">sábado, 22 de febrero de 2020</div>
<div class="t" style="left:179.20px;top:216.41px;font-size:6.6px;color:#4a4846;font-style:italic;transform:scaleX(0.8318);">9:58:40</div>
<div class="t" style="left:439.65px;top:216.41px;font-size:6.6px;color:#4a4846;font-style:italic;transform:scaleX(0.8318);">20:46:31</div>
<div class="t" style="left:465.30px;top:216.41px;font-size:6.6px;color:#4a4846;transform:scaleX(0.8503);">Yes</div>
<div class="t" style="left:496.00px;top:216.41px;font-size:6.6px;color:#4a4846;transform:scaleX(0.8503);">$27.35</div>
<div class="t" style="left:537.50px;top:216.41px;font-size:6.6px;color:#4a4846;transform:scaleX(0.8503);">$2.24</div>
<div class="t" style="left:587.00px;top:216.41px;font-size:6.6px;color:#4a4846;transform:scaleX(0.8503);">$2.12</div>
<div class="t" style="left:22.20px;top:226.77px;font-size:6.6px;color:#4a4846;font-style:italic;transform:scaleX(0.8473);">miércoles, 19 de febrero de 2020</div>
<div class="t" style="left:179.20px;top:226.77px;font-size:6.6px;color:#4a4846;font-style:italic;transform:scaleX(0.8318);">3:48:49</div>
<div class="t" style="left:442.70px;top:226.77px;font-size:6.6px;color:#4a4846;font-style:italic;transform:scaleX(0.8318);">2:36:05</div>
<div class="t" style="left:465.30px;top:226.77px;font-size:6.6px;color:#4a4846;transform:scaleX(0.8503);">Yes</div>
<div class="t" style="left:496.00px;top:226.77px;font-size:6.6px;color:#4a4846;transform:scaleX(0.8503);">$47.74</div>
<div class="t" style="left:537.50px;top:226.77px;font-size:6.6px;color:#4a4846;transform:scaleX(0.8503);">$7.63</div>
<div class="t" style="left:587.00px;top:226.77px;font-size:6.6px;color:#4a4846;transform:scaleX(0.8503);">$1.43</div>
<div class="t" style="left:22.20px;top:237.13px;font-size:6.6px;color:#4a4846;font-style:italic;transform:scaleX(0.8473);">miércoles, 19 de febrero de 2020</div>
<div class="t" style="left:176.55px;top:237.13px;font-size:6.6px;color:#4a4846;font-style:italic;transform:scaleX(0.8318);">19:25:11</div>
<div class="t" style="left:439.65px;top:237.13px;font-size:6.6px;color:#4a4846;font-style:italic;transform:scaleX(0.8318);">20:21:49</div>
<div class="t" style="left:465.30px;top:237.13px;font-size:6.6px;color:#4a4846;transform:scaleX(0.8503);">Yes</div>
<div class="t" style="left:496.00px;top:237.13px;font-size:6.6px;color:#4a4846;transform:scaleX(0.8503);">$42.97</div>
<div class="t" style="left:537.50px;top:237.13px;font-size:6.6px;color:#4a4846;transform:scaleX(0.8503);">$1.47</div>
<div class="t" style="left:587.00px;top:237.13px;font-size:6.6px;color:#4a4846;transform:scaleX(0.8503);">$3.10</div>
<div class="t" style="left:31.72px;top:247.49px;font-size:6.6px;color:#4a4846;font-style:italic;transform:scaleX(0.8595);">lunes, 17 de febrero de 2020</div>
<div class="t" style="left:179.20px;top:247.49px;font-size:6.6px;color:#4a4846;font-style:italic;transform:scaleX(0.8318);">8:57:27</div>
<div class="t" style="left:439.65px;top:247.49px;font-size:6.6px;color:#4a4846;font-style:italic;transform:scaleX(0.8318);">21:13:13</div>
<div class="t" style="left:465.30px;top:247.49px;font-size:6.6px;color:#4a4846;transform:scaleX(0.8503);">Yes</div>
<div class="t" style="left:496.00px;top:247.49px;font-size:6.6px;color:#4a4846;transform:scaleX(0.8503);">$86.79</div>
<div class="t" style="left:537.50px;top:247.49px;font-size:6.6px;color:#4a4846;transform:scaleX(0.8503);">$6.65</div>
<div class="t" style="left:587.00px;top:247.49px;font-size:6.6px;color:#4a4846;transform:scaleX(0.8503);">$2.06</div>
<div class="t" style="left:23.52px;top:257.85px;font-size:6.6px;color:#4a4846;font-style:italic;transform:scaleX(0.8595);">domingo, 16 de febrero de 2020</div>
<div class="t" style="left:179.20px;top:257.85px;font-size:6.6px;color:#4a4846;font-style:italic;transform:scaleX(0.8318);">6:19:17</div>
<div class="t" style="left:440.05px;top:257.85px;font-size:6.6px;color:#4a4846;font-style:italic;transform:scaleX(0.8318);">21:05:11</div>
<div class="t" style="left:465.30px;top:257.85px;font-size:6.6px;color:#4a4846;transform:scaleX(0.8503);">Yes</div>
<div class="t" style="left:496.00px;top:257.85px;font-size:6.6px;color:#4a4846;transform:scaleX(0.8503);">$67.86</div>
<div class="t" style="left:537.50px;top:257.85px;font-size:6.6px;color:#4a4846;transform:scaleX(0.8503);">$4.08</div>
<div class="t" style="left:587.00px;top:257.85px;font-size:6.6px;color:#4a4846;transform:scaleX(0.8503);">$3.68</div>
<div class="t" style="left:26.67px;top:268.21px;font-size:6.6px;color:#4a4846;font-style:italic;transform:scaleX(0.8595);">sábado, 29 de febrero de 2020</div>
<div class="t" style="left:179.20px;top:268.21px;font-size:6.6px;color:#4a4846;font-style:italic;transform:scaleX(0.8318);">6:57:49</div>
<div class="t" style="left:439.65px;top:268.21px;font-size:6.6px;color:#4a4846;font-style:italic;transform:scaleX(0.8318);">20:57:49</div>
<div class="t" style="left:465.30px;top:268.21px;font-size:6.6px;color:#4a4846;transform:scaleX(0.8503);">Yes</div>
<div class="t" style="left:496.00px;top:268.21px;font-size:6.6px;color:#4a4846;transform:scaleX(0.8503);">$89.72</div>
<div class="t" style="left:537.50px;top:268.21px;font-size:6.6px;color:#4a4846;transform:scaleX(0.8503);">$7.22</div>
<div class="t" style="left:587.00px;top:268.21px;font-size:6.6px;color:#4a4846;transform:scaleX(0.8503);">$5.44</div>
<div class="t" style="left:26.68px;top:278.57px;font-size:6.6px;color:#4a4846;font-style:italic;transform:scaleX(0.8595);">domingo, 2 de febrero de 2020</div>
<div class="t" style="left:179.20px;top:278.57px;font-size:6.6px;color:#4a4846;font-style:italic;transform:scaleX(0.8318);">7:05:00</div>
<div class="t" style="left:439.65px;top:278.57px;font-size:6.6px;color:#4a4846;font-style:italic;transform:scaleX(0.8318);">21:44:48</div>
<div class="t" style="left:465.30px;top:278.57px;font-size:6.6px;color:#4a4846;transform:scaleX(0.8503);">Yes</div>
<div class="t" style="left:496.00px;top:278.57px;font-size:6.6px;color:#4a4846;transform:scaleX(0.8503);">$61.13</div>
<div class="t" style="left:537.50px;top:278.57px;font-size:6.6px;color:#4a4846;transform:scaleX(0.8503);">$4.55</div>
<div class="t" style="left:587.00px;top:278.57px;font-size:6.6px;color:#4a4846;transform:scaleX(0.8503);">$1.94</div>
<div class="t" style="left:27.00px;top:288.93px;font-size:6.6px;color:#4a4846;font-style:italic;transform:scaleX(0.8595);">viernes, 28 de febrero de 2020</div>
<div class="t" style="left:176.15px;top:288.93px;font-size:6.6px;color:#4a4846;font-style:italic;transform:scaleX(0.8318);">21:00:25</div>
<div class="t" style="left:439.65px;top:288.93px;font-size:6.6px;color:#4a4846;font-style:italic;transform:scaleX(0.8318);">21:56:24</div>
<div class="t" style="left:465.30px;top:288.93px;font-size:6.6px;color:#4a4846;transform:scaleX(0.8503);">Yes</div>
<div class="t" style="left:496.00px;top:288.93px;font-size:6.6px;color:#4a4846;transform:scaleX(0.8503);">$37.08</div>
<div class="t" style="left:537.50px;top:288.93px;font-size:6.6px;color:#4a4846;transform:scaleX(0.8503);">$3.67</div>
<div class="t" style="left:587.00px;top:288.93px;font-size:6.6px;color:#4a4846;transform:scaleX(0.8503);">$4.12</div>
<div class="t" style="left:26.68px;top:299.29px;font-size:6.6px;color:#4a4846;font-style:italic;transform:scaleX(0.8595);">domingo, 9 de febrero de 2020</div>
<div class="t" style="left:179.20px;top:299.29px;font-size:6.6px;color:#4a4846;font-style:italic;transform:scaleX(0.8318);">6:30:01</div>
<div class="t" style="left:439.65px;top:299.29px;font-size:6.6px;color:#4a4846;font-style:italic;transform:scaleX(0.8318);">21:44:16</div>
<div class="t" style="left:465.30px;top:299.29px;font-size:6.6px;color:#4a4846;transform:scaleX(0.8503);">Yes</div>
<div class="t" style="left:496.00px;top:299.29px;font-size:6.6px;color:#4a4846;transform:scaleX(0.8503);">$175.50</div>
<div class="t" style="left:537.50px;top:299.29px;font-size:6.6px;color:#4a4846;transform:scaleX(0.8503);">$0.26</div>
<div class="t" style="left:587.00px;top:299.29px;font-size:6.6px;color:#4a4846;transform:scaleX(0.8503);">$2.25</div>
<div class="t" style="left:29.82px;top:309.65px;font-size:6.6px;color:#4a4846;font-style:italic;transform:scaleX(0.8595);">sábado, 8 de febrero de 2020</div>
<div class="t" style="left:176.15px;top:309.65px;font-size:6.6px;color:#4a4846;font-style:italic;transform:scaleX(0.8318);">12:06:05</div>
<div class="t" style="left:442.70px;top:309.65px;font-size:6.6px;color:#4a4846;font-style:italic;transform:scaleX(0.8318);">2:15:36</div>
<div class="t" style="left:465.30px;top:309.65px;font-size:6.6px;color:#4a4846;transform:scaleX(0.8503);">Yes</div>
<div class="t" style="left:496.00px;top:309.65px;font-size:6.6px;color:#4a4846;transform:scaleX(0.8503);">$36.15</div>
<div class="t" style="left:537.50px;top:309.65px;font-size:6.6px;color:#4a4846;transform:scaleX(0.8503);">$8.72</div>
<div class="t" style="left:587.00px;top:309.65px;font-size:6.6px;color:#4a4846;transform:scaleX(0.8503);">$1.75</div>
<div class="t" style="left:27.94px;top:320.01px;font-size:6.6px;color:#4a4846;font-style:italic;transform:scaleX(0.8595);">martes, 25 de febrero de 2020</div>
<div class="t" style="left:179.20px;top:320.01px;font-size:6.6px;color:#4a4846;font-style:italic;transform:scaleX(0.8318);">9:01:32</div>
<div class="t" style="left:439.65px;top:320.01px;font-size:6.6px;color:#4a4846;font-style:italic;transform:scaleX(0.8318);">20:54:47</div>
<div class="t" style="left:465.30px;top:320.01px;font-size:6.6px;color:#4a4846;transform:scaleX(0.8503);">No</div>
<div class="t" style="left:496.00px;top:320.01px;font-size:6.6px;color:#4a4846;transform:scaleX(0.8503);">$48.83</div>
<div class="t" style="left:537.50px;top:320.01px;font-size:6.6px;color:#4a4846;transform:scaleX(0.8503);">$4.01</div>
<div class="t" style="left:587.00px;top:320.01px;font-size:6.6px;color:#4a4846;transform:scaleX(0.8503);">$1.80</div>
<div class="t" style="left:36.13px;top:330.37px;font-size:6.6px;color:#4a4846;font-style:italic;transform:scaleX(0.8595);">jueves, 16 de abril de 2020</div>
<div class="t" style="left:179.20px;top:330.37px;font-size:6.6px;color:#4a4846;font-style:italic;transform:scaleX(0.8318);">9:33:58</div>
<div class="t" style="left:442.70px;top:330.37px;font-size:6.6px;color:#4a4846;font-style:italic;transform:scaleX(0.8318);">7:54:34</div>
<div class="t" style="left:465.30px;top:330.37px;font-size:6.6px;color:#4a4846;transform:scaleX(0.8503);">No</div>
<div class="t" style="left:496.00px;top:330.37px;font-size:6.6px;color:#4a4846;transform:scaleX(0.8503);">$2,314.31</div>
<div class="t" style="left:537.50px;top:330.37px;font-size:6.6px;color:#4a4846;transform:scaleX(0.8503);">$8.05</div>
<div class="t" style="left:587.00px;top:330.37px;font-size:6.6px;color:#4a4846;transform:scaleX(0.8503);">$3.58</div>
<div class="t" style="left:24.48px;top:340.73px;font-size:6.6px;color:#4a4846;font-style:italic;transform:scaleX(0.8595);">miércoles, 29 de enero de 2020</div>
<div class="t" style="left:179.20px;top:340.73px;font-size:6.6px;color:#4a4846;font-style:italic;transform:scaleX(0.8318);">7:40:38</div>
<div class="t" style="left:439.65px;top:340.73px;font-size:6.6px;color:#4a4846;font-style:italic;transform:scaleX(0.8318);">18:41:50</div>
<div class="t" style="left:465.30px;top:340.73px;font-size:6.6px;color:#4a4846;transform:scaleX(0.8503);">No</div>
<div class="t" style="left:496.00px;top:340.73px;font-size:6.6px;color:#4a4846;transform:scaleX(0.8503);">$1,212.18</div>
<div class="t" style="left:537.50px;top:340.73px;font-size:6.6px;color:#4a4846;transform:scaleX(0.8503);">$0.32</div>
<div class="t" style="left:587.00px;top:340.73px;font-size:6.6px;color:#4a4846;transform:scaleX(0.8503);">$1.16</div>
<div class="t" style="left:26.99px;top:351.09px;font-size:6.6px;color:#4a4846;font-style:italic;transform:scaleX(0.8595);">domingo, 26 de enero de 2020</div>
<div class="t" style="left:179.20px;top:351.09px;font-size:6.6px;color:#4a4846;font-style:italic;transform:scaleX(0.8318);">5:27:29</div>
<div class="t" style="left:439.65px;top:351.09px;font-size:6.6px;color:#4a4846;font-style:italic;transform:scaleX(0.8318);">18:46:41</div>
<div class="t" style="left:465.30px;top:351.09px;font-size:6.6px;color:#4a4846;transform:scaleX(0.8503);">No</div>
<div class="t" style="left:496.00px;top:351.09px;font-size:6.6px;color:#4a4846;transform:scaleX(0.8503);">$831.38</div>
<div class="t" style="left:537.50px;top:351.09px;font-size:6.6px;color:#4a4846;transform:scaleX(0.8503);">$1.30</div>
<div class="t" style="left:587.00px;top:351.09px;font-size:6.6px;color:#4a4846;transform:scaleX(0.8503);">$2.63</div>
<div class="t" style="left:30.45px;top:361.45px;font-size:6.6px;color:#4a4846;font-style:italic;transform:scaleX(0.8595);">viernes, 17 de enero de 2020</div>
<div class="t" style="left:179.20px;top:361.45px;font-size:6.6px;color:#4a4846;font-style:italic;transform:scaleX(0.8318);">7:55:37</div>
<div class="t" style="left:439.65px;top:361.45px;font-size:6.6px;color:#4a4846;font-style:italic;transform:scaleX(0.8318);">18:46:44</div>
<div class="t" style="left:465.30px;top:361.45px;font-size:6.6px;color:#4a4846;transform:scaleX(0.8503);">No</div>
<div class="t" style="left:496.00px;top:361.45px;font-size:6.6px;color:#4a4846;transform:scaleX(0.8503);">$449.70</div>
<div class="t" style="left:537.50px;top:361.45px;font-size:6.6px;color:#4a4846;transform:scaleX(0.8503);">$6.77</div>
<div class="t" style="left:587.00px;top:361.45px;font-size:6.6px;color:#4a4846;transform:scaleX(0.8503);">$3.28</div>
<div class="t" style="left:35.50px;top:371.81px;font-size:6.6px;color:#4a4846;font-style:italic;transform:scaleX(0.8595);">jueves, 9 de enero de 2020</div>
<div class="t" style="left:179.20px;top:371.81px;font-size:6.6px;color:#4a4846;font-style:italic;transform:scaleX(0.8318);">5:45:09</div>
<div class="t" style="left:439.65px;top:371.81px;font-size:6.6px;color:#4a4846;font-style:italic;transform:scaleX(0.8318);">19:14:13</div>
<div class="t" style="left:465.30px;top:371.81px;font-size:6.6px;color:#4a4846;transform:scaleX(0.8503);">No</div>
<div class="t" style="left:496.00px;top:371.81px;font-size:6.6px;color:#4a4846;transform:scaleX(0.8503);">$450.19</div>
<div class="t" style="left:537.50px;top:371.81px;font-size:6.6px;color:#4a4846;transform:scaleX(0.8503);">$1.06</div>
<div class="t" style="left:587.00px;top:371.81px;font-size:6.6px;color:#4a4846;transform:scaleX(0.8503);">$2.95</div>
<div class="t" style="left:33.61px;top:382.17px;font-size:6.6px;color:#4a4846;font-style:italic;transform:scaleX(0.8595);">viernes, 3 de enero de 2020</div>
<div class="t" style="left:179.20px;top:382.17px;font-size:6.6px;color:#4a4846;font-style:italic;transform:scaleX(0.8318);">5:35:29</div>
<div class="t" style="left:439.65px;top:382.17px;font-size:6.6px;color:#4a4846;font-style:italic;transform:scaleX(0.8318);">18:45:54</div>
<div class="t" style="left:465.30px;top:382.17px;font-size:6.6px;color:#4a4846;transform:scaleX(0.8503);">No</div>
<div class="t" style="left:496.00px;top:382.17px;font-size:6.6px;color:#4a4846;transform:scaleX(0.8503);">$525.53</div>
<div class="t" style="left:537.50px;top:382.17px;font-size:6.6px;color:#4a4846;transform:scaleX(0.8503);">$6.08</div>
<div class="t" style="left:587.00px;top:382.17px;font-size:6.6px;color:#4a4846;transform:scaleX(0.8503);">$1.12</div>
<div class="a" style="left:630.6px;top:107.6px;width:10.4px;height:283px;overflow:hidden">
<div class="t" style="left:1.60px;top:5.21px;font-size:6.6px;color:#4a4846;transform:scaleX(0.8503);">$7.</div>
<div class="t" style="left:1.60px;top:15.57px;font-size:6.6px;color:#4a4846;transform:scaleX(0.8503);">$7.</div>
<div class="t" style="left:1.60px;top:25.93px;font-size:6.6px;color:#4a4846;transform:scaleX(0.8503);">$8.</div>
<div class="t" style="left:1.60px;top:36.29px;font-size:6.6px;color:#4a4846;transform:scaleX(0.8503);">$8.</div>
<div class="t" style="left:1.60px;top:46.65px;font-size:6.6px;color:#4a4846;transform:scaleX(0.8503);">$8.</div>
<div class="t" style="left:1.60px;top:57.01px;font-size:6.6px;color:#4a4846;transform:scaleX(0.8503);">$3.</div>
<div class="t" style="left:1.60px;top:67.37px;font-size:6.6px;color:#4a4846;transform:scaleX(0.8503);">$3.</div>
<div class="t" style="left:1.60px;top:77.73px;font-size:6.6px;color:#4a4846;transform:scaleX(0.8503);">$3.</div>
<div class="t" style="left:1.60px;top:88.09px;font-size:6.6px;color:#4a4846;transform:scaleX(0.8503);">$3.</div>
<div class="t" style="left:1.60px;top:98.45px;font-size:6.6px;color:#4a4846;transform:scaleX(0.8503);">$3.</div>
<div class="t" style="left:1.60px;top:108.81px;font-size:6.6px;color:#4a4846;transform:scaleX(0.8503);">$3.</div>
<div class="t" style="left:1.60px;top:119.17px;font-size:6.6px;color:#4a4846;transform:scaleX(0.8503);">$3.</div>
<div class="t" style="left:1.60px;top:129.53px;font-size:6.6px;color:#4a4846;transform:scaleX(0.8503);">$3.</div>
<div class="t" style="left:1.60px;top:139.89px;font-size:6.6px;color:#4a4846;transform:scaleX(0.8503);">$3.</div>
<div class="t" style="left:1.60px;top:150.25px;font-size:6.6px;color:#4a4846;transform:scaleX(0.8503);">$3.</div>
<div class="t" style="left:1.60px;top:160.61px;font-size:6.6px;color:#4a4846;transform:scaleX(0.8503);">$3.</div>
<div class="t" style="left:1.60px;top:170.97px;font-size:6.6px;color:#4a4846;transform:scaleX(0.8503);">$3.</div>
<div class="t" style="left:1.60px;top:181.33px;font-size:6.6px;color:#4a4846;transform:scaleX(0.8503);">$3.</div>
<div class="t" style="left:1.60px;top:191.69px;font-size:6.6px;color:#4a4846;transform:scaleX(0.8503);">$3.</div>
<div class="t" style="left:1.60px;top:202.05px;font-size:6.6px;color:#4a4846;transform:scaleX(0.8503);">$3.</div>
<div class="t" style="left:1.60px;top:212.41px;font-size:6.6px;color:#4a4846;transform:scaleX(0.8503);">$3.</div>
<div class="t" style="left:1.60px;top:222.77px;font-size:6.6px;color:#4a4846;transform:scaleX(0.8503);">$2.</div>
<div class="t" style="left:1.60px;top:233.13px;font-size:6.6px;color:#4a4846;transform:scaleX(0.8503);">$2.</div>
<div class="t" style="left:1.60px;top:243.49px;font-size:6.6px;color:#4a4846;transform:scaleX(0.8503);">$2.</div>
<div class="t" style="left:1.60px;top:253.85px;font-size:6.6px;color:#4a4846;transform:scaleX(0.8503);">$2.</div>
<div class="t" style="left:1.60px;top:264.21px;font-size:6.6px;color:#4a4846;transform:scaleX(0.8503);">$2.</div>
<div class="t" style="left:1.60px;top:274.57px;font-size:6.6px;color:#4a4846;transform:scaleX(0.8503);">$2.</div>
</div>
<div class="a" style="left:641px;top:107.6px;width:6.6px;height:283.4px;background:#e8e8e8"></div>
<div class="a" style="left:641px;top:107.6px;width:6.6px;height:23px;background:#f0f0f0"></div>
<div class="a" style="left:641px;top:130.5px;width:6.6px;height:106px;background:#c2c2c2"></div>
<svg style="left:642.3px;top:109.5px" width="4" height="3" viewBox="0 0 4 3"><path d="M0.4 2.5L2 0.9 3.6 2.5" fill="none" stroke="#323130" stroke-width="0.8"/></svg>
<svg style="left:642.3px;top:385px" width="4" height="3" viewBox="0 0 4 3"><path d="M0.4 0.5L2 2.1 3.6 0.5" fill="none" stroke="#323130" stroke-width="0.8"/></svg>
<div class="a" style="left:21.2px;top:391px;width:620px;height:7px;background:#e8e8e8"></div>
<div class="a" style="left:21.2px;top:391px;width:7.5px;height:7px;background:#f0f0f0"></div>
<div class="a" style="left:28.8px;top:391px;width:382px;height:7px;background:#c2c2c2"></div>
<svg style="left:23.5px;top:392.6px" width="3" height="4" viewBox="0 0 3 4"><path d="M2.5 0.4L0.9 2 2.5 3.6" fill="none" stroke="#323130" stroke-width="0.8"/></svg>
<svg style="left:634.5px;top:392.6px" width="3" height="4" viewBox="0 0 3 4"><path d="M0.5 0.4L2.1 2 0.5 3.6" fill="none" stroke="#323130" stroke-width="0.8"/></svg>
<div class="a" style="left:641px;top:391px;width:6.6px;height:7px;background:#fff"></div>
<div class="a" style="left:647.7px;top:79px;width:0.8px;height:319px;background:#e1dfdd"></div>
<div class="t" style="left:652.60px;top:85.22px;font-size:7.3px;color:#252423;font-weight:700;transform:scaleX(0.9730);">Data</div>
<svg style="left:758px;top:85.8px" width="6" height="6" viewBox="0 0 6 6"><path d="M0.5 0.5L2.8 3 0.5 5.5 M3 0.5L5.3 3 3 5.5" fill="none" stroke="#323130" stroke-width="0.7"/></svg>
<div class="a" style="left:650.6px;top:101.3px;width:114.9px;height:13.7px;background:#fff;border:0.75px solid #b3b1af"></div>
<svg style="left:654px;top:104px" width="7" height="8" viewBox="0 0 7 8"><circle cx="4.3" cy="3" r="2.3" fill="none" stroke="#605e5c" stroke-width="0.7"/><path d="M2.6 4.7L0.5 7.3" stroke="#605e5c" stroke-width="0.8"/></svg>
<div class="t" style="left:664.20px;top:106.21px;font-size:6.6px;color:#605e5c;transform:scaleX(0.9949);">Search</div>
<div class="a" style="left:762.5px;top:119px;width:3.3px;height:261px;background:#c8c6c4"></div>
<svg style="left:652.5px;top:122.90px" width="4" height="6" viewBox="0 0 4 6"><path d="M0.5 0.4L3 2.8 0.5 5.2" fill="none" stroke="#605e5c" stroke-width="0.6"/></svg>
<svg style="left:659px;top:122.1px" width="7" height="7" viewBox="0 0 7 7"><rect x="0.4" y="0.4" width="6.2" height="6.2" fill="#a19f9d" stroke="#323130" stroke-width="0.8"/><path d="M0.4 1.6h6.2" stroke="#323130" stroke-width="1.6"/><path d="M0.4 4.2h6.2 M2.5 2v4.6 M4.5 2v4.6" stroke="#323130" stroke-width="0.7"/></svg>
<div class="t" style="left:668.20px;top:123.31px;font-size:6.6px;color:#484644;transform:scaleX(0.9011);">Dim_customerID</div>
<svg style="left:652.5px;top:134.88px" width="4" height="6" viewBox="0 0 4 6"><path d="M0.5 0.4L3 2.8 0.5 5.2" fill="none" stroke="#605e5c" stroke-width="0.6"/></svg>
<svg style="left:659px;top:134.07999999999998px" width="7" height="7" viewBox="0 0 7 7"><rect x="0.4" y="0.4" width="6.2" height="6.2" fill="#a19f9d" stroke="#323130" stroke-width="0.8"/><path d="M0.4 1.6h6.2" stroke="#323130" stroke-width="1.6"/><path d="M0.4 4.2h6.2 M2.5 2v4.6 M4.5 2v4.6" stroke="#323130" stroke-width="0.7"/></svg>
<div class="t" style="left:668.20px;top:135.29px;font-size:6.6px;color:#484644;transform:scaleX(0.9011);">Dim_Date</div>
<svg style="left:652.5px;top:146.86px" width="4" height="6" viewBox="0 0 4 6"><path d="M0.5 0.4L3 2.8 0.5 5.2" fill="none" stroke="#605e5c" stroke-width="0.6"/></svg>
<svg style="left:659px;top:146.06px" width="7" height="7" viewBox="0 0 7 7"><rect x="0.4" y="0.4" width="6.2" height="6.2" fill="#a19f9d" stroke="#323130" stroke-width="0.8"/><path d="M0.4 1.6h6.2" stroke="#323130" stroke-width="1.6"/><path d="M0.4 4.2h6.2 M2.5 2v4.6 M4.5 2v4.6" stroke="#323130" stroke-width="0.7"/></svg>
<div class="t" style="left:668.20px;top:147.27px;font-size:6.6px;color:#484644;transform:scaleX(0.9011);">Dim_delivery_area</div>
<svg style="left:652.5px;top:158.84px" width="4" height="6" viewBox="0 0 4 6"><path d="M0.5 0.4L3 2.8 0.5 5.2" fill="none" stroke="#605e5c" stroke-width="0.6"/></svg>
<svg style="left:659px;top:158.04px" width="7" height="7" viewBox="0 0 7 7"><rect x="0.4" y="0.4" width="6.2" height="6.2" fill="#a19f9d" stroke="#323130" stroke-width="0.8"/><path d="M0.4 1.6h6.2" stroke="#323130" stroke-width="1.6"/><path d="M0.4 4.2h6.2 M2.5 2v4.6 M4.5 2v4.6" stroke="#323130" stroke-width="0.7"/></svg>
<div class="t" style="left:668.20px;top:159.25px;font-size:6.6px;color:#484644;transform:scaleX(0.9011);">Dim_delivery_name</div>
<svg style="left:652.5px;top:170.82px" width="4" height="6" viewBox="0 0 4 6"><path d="M0.5 0.4L3 2.8 0.5 5.2" fill="none" stroke="#605e5c" stroke-width="0.6"/></svg>
<svg style="left:659px;top:170.01999999999998px" width="7" height="7" viewBox="0 0 7 7"><rect x="0.4" y="0.4" width="6.2" height="6.2" fill="#a19f9d" stroke="#323130" stroke-width="0.8"/><path d="M0.4 1.6h6.2" stroke="#323130" stroke-width="1.6"/><path d="M0.4 4.2h6.2 M2.5 2v4.6 M4.5 2v4.6" stroke="#323130" stroke-width="0.7"/></svg>
<div class="t" style="left:668.20px;top:171.23px;font-size:6.6px;color:#484644;transform:scaleX(0.9011);">Dim_restaurant</div>
<svg style="left:652.5px;top:182.80px" width="4" height="6" viewBox="0 0 4 6"><path d="M0.5 0.4L3 2.8 0.5 5.2" fill="none" stroke="#605e5c" stroke-width="0.6"/></svg>
<svg style="left:659px;top:182.0px" width="7" height="7" viewBox="0 0 7 7"><rect x="0.4" y="0.4" width="6.2" height="6.2" fill="#a19f9d" stroke="#323130" stroke-width="0.8"/><path d="M0.4 1.6h6.2" stroke="#323130" stroke-width="1.6"/><path d="M0.4 4.2h6.2 M2.5 2v4.6 M4.5 2v4.6" stroke="#323130" stroke-width="0.7"/></svg>
<div class="t" style="left:668.20px;top:183.21px;font-size:6.6px;color:#484644;transform:scaleX(0.9011);">Dim_Time</div>
<svg style="left:651.8px;top:195.68px" width="6" height="4" viewBox="0 0 6 4"><path d="M0.4 0.5L2.8 3 5.2 0.5" fill="none" stroke="#605e5c" stroke-width="0.6"/></svg>
<svg style="left:659px;top:193.98px" width="7" height="7" viewBox="0 0 7 7"><rect x="0.4" y="0.4" width="6.2" height="6.2" fill="#a19f9d" stroke="#323130" stroke-width="0.8"/><path d="M0.4 1.6h6.2" stroke="#323130" stroke-width="1.6"/><path d="M0.4 4.2h6.2 M2.5 2v4.6 M4.5 2v4.6" stroke="#323130" stroke-width="0.7"/></svg>
<div class="t" style="left:668.20px;top:195.19px;font-size:6.6px;color:#484644;transform:scaleX(0.9011);">Fact_table</div>
<div class="t" style="left:675.60px;top:207.17px;font-size:6.6px;color:#484644;font-style:italic;transform:scaleX(0.9011);">ASAP</div>
<div class="t" style="left:675.60px;top:219.15px;font-size:6.6px;color:#484644;transform:scaleX(0.9011);">Date</div>
<div class="t" style="left:675.60px;top:231.13px;font-size:6.6px;color:#484644;transform:scaleX(0.9011);">Delivery fee</div>
<div class="t" style="left:675.60px;top:243.11px;font-size:6.6px;color:#484644;transform:scaleX(0.9011);">Delivery time</div>
<div class="t" style="left:675.60px;top:255.09px;font-size:6.6px;color:#484644;transform:scaleX(0.9011);">Discount</div>
<div class="t" style="left:675.60px;top:267.07px;font-size:6.6px;color:#484644;transform:scaleX(0.9011);">ID_area</div>
<div class="t" style="left:675.60px;top:279.05px;font-size:6.6px;color:#484644;transform:scaleX(0.9011);">ID_customer</div>
<div class="t" style="left:675.60px;top:291.03px;font-size:6.6px;color:#484644;transform:scaleX(0.9011);">ID_delivery_name</div>
<div class="t" style="left:675.60px;top:303.01px;font-size:6.6px;color:#484644;transform:scaleX(0.9011);">ID_Restaurant</div>
<svg style="left:667px;top:313.98px" width="5.5" height="6.5" viewBox="0 0 5.5 6.5"><path d="M5.3 0.4H0.5L2.9 3.25 0.5 6.1H5.3" fill="none" stroke="#323130" stroke-width="0.7"/></svg>
<div class="t" style="left:675.60px;top:314.99px;font-size:6.6px;color:#484644;transform:scaleX(0.9011);">Index</div>
<div class="t" style="left:675.60px;top:326.97px;font-size:6.6px;color:#484644;transform:scaleX(0.9011);">Refunded amount</div>
<div class="t" style="left:675.60px;top:338.95px;font-size:6.6px;color:#484644;transform:scaleX(0.9011);">Service fee</div>
<div class="t" style="left:675.60px;top:350.93px;font-size:6.6px;color:#484644;transform:scaleX(0.9011);">Sub Total</div>
<div class="a" style="left:649.9px;top:360.00px;width:112.6px;height:10px;background:#d2d0ce"></div>
<div class="t" style="left:675.60px;top:362.91px;font-size:6.6px;color:#484644;transform:scaleX(0.9011);">Time customer placed order</div>
<div class="t" style="left:675.60px;top:374.89px;font-size:6.6px;color:#484644;transform:scaleX(0.9011);">Time driver arrived at restaurant</div>
<div class="t" style="left:675.60px;top:386.87px;font-size:6.6px;color:#484644;transform:scaleX(0.9011);">Time order placed at restaurant</div>
<div class="t" style="left:2.30px;top:401.97px;font-size:6.3px;color:#4a4846;transform:scaleX(0.9349);">Table: Fact_table (72.314 rows, 68 filtered rows) Column: Time customer placed order (34.819 distinct values, 68 filtered distinct values)</div>
<div class="a" style="left:0;top:409.8px;width:768px;height:20.2px;background:linear-gradient(90deg,#1d3843,#1c2c3a 60%,#1b2a3a)"></div>
<div class="a" style="left:23.8px;top:409.8px;width:144.2px;height:20.2px;background:#f3f3f3"></div>
<svg style="left:7.8px;top:415.6px" width="8.4" height="8.4" viewBox="0 0 8.4 8.4"><path d="M0 1.1L3.6 0.6V3.8H0z M4.3 0.5L8.4 0V3.8H4.3z M0 4.6H3.6V7.8L0 7.3z M4.3 4.6H8.4V8.4L4.3 7.9z" fill="#ffffff"/></svg>
<svg style="left:29.7px;top:414.8px" width="9" height="9" viewBox="0 0 9 9"><circle cx="5.5" cy="3.5" r="2.7" fill="none" stroke="#1f1f1f" stroke-width="0.8"/><path d="M3.6 5.4L0.8 8.2" stroke="#1f1f1f" stroke-width="0.9"/></svg>
<div class="t" style="left:44.20px;top:416.74px;font-size:7.4px;color:#323232;transform:scaleX(0.9602);">Buscar</div>
<svg style="left:175.6px;top:415.8px" width="8.8" height="8.4" viewBox="0 0 8.8 8.4"><path d="M0.5 0.7h5.2v6.9H0.5z" fill="none" stroke="#c8ccd0" stroke-width="0.9"/><path d="M0.5 1h5.2 M0.5 7.3h5.2" stroke="#c8ccd0" stroke-width="1.3"/><path d="M8.1 0.3v7.8" stroke="#c8ccd0" stroke-width="0.9"/></svg>
<svg style="left:200px;top:414px" width="12" height="12" viewBox="0 0 12 12"><path d="M0.5 3h11v8.5h-11z" fill="#f4f4f4"/><path d="M3.8 3V1.4A0.9 0.9 0 0 1 4.7 0.5h2.6A0.9 0.9 0 0 1 8.2 1.4V3" fill="none" stroke="#f4f4f4" stroke-width="0.9"/><rect x="3.6" y="4.6" width="2.2" height="2.2" fill="#f25022"/><rect x="6.2" y="4.6" width="2.2" height="2.2" fill="#7fba00"/><rect x="3.6" y="7.2" width="2.2" height="2.2" fill="#00a4ef"/><rect x="6.2" y="7.2" width="2.2" height="2.2" fill="#ffb900"/></svg>
<svg style="left:224px;top:413.8px" width="12.4" height="12.4" viewBox="0 0 12 12"><circle cx="6" cy="6" r="6" fill="#db4437"/><path d="M6 6L0.8 9A6 6 0 0 0 9 11.2z" fill="#0f9d58"/><path d="M6 6L9 11.2A6 6 0 0 0 11.8 4.5L6 3z" fill="#f4b400"/><path d="M6 3h5.8A6 6 0 0 0 0.8 3z" fill="#db4437"/><circle cx="6" cy="6" r="2.7" fill="#fff"/><circle cx="6" cy="6" r="2.1" fill="#4285f4"/></svg>
<div class="a" style="left:220.3px;top:428.6px;width:20.5px;height:1.4px;background:#76b9ed"></div>
<svg style="left:249px;top:414px" width="12.5" height="12" viewBox="0 0 12.5 12"><circle cx="7" cy="6" r="5.5" fill="#ed6c47"/><path d="M7 0.5A5.5 5.5 0 0 1 12.5 6H7z" fill="#ff8f6b"/><rect x="0" y="2.5" width="6.5" height="7" rx="0.6" fill="#c43e1c"/><text x="1.5" y="8" font-family="Liberation Sans" font-weight="bold" font-size="5.5" fill="#fff">P</text></svg>
<svg style="left:274px;top:413.8px" width="12" height="12" viewBox="0 0 12 12"><path d="M2.6 6.6h6.9A3.5 3.5 0 1 0 8.7 9" fill="none" stroke="#1ea7e1" stroke-width="2.1"/><path d="M1.2 10.8C-0.5 9 3 3.5 8 1.6 10.5 0.7 12 1 11.6 2.6" fill="none" stroke="#f6c344" stroke-width="0.9"/></svg>
<svg style="left:298.5px;top:414px" width="12" height="12" viewBox="0 0 12 12"><path d="M3 1h7l-1.5 10H1.5z" fill="#a5d5e8"/><path d="M3 1h7l-1.5 10H1.5z M4 3.5h4.5 M3.6 5.5h4.5 M3.3 7.5h4.5" fill="none" stroke="#5a8ea3" stroke-width="0.5"/></svg>
<div class="a" style="left:294.6px;top:428.6px;width:20.5px;height:1.4px;background:#76b9ed"></div>
<svg style="left:323.4px;top:414.5px" width="12.3" height="11" viewBox="0 0 12.3 11"><path d="M0 1h4.5l1.2 1.3h6.6V11H0z" fill="#f8c542"/><rect x="0" y="3.8" width="12.3" height="7.2" fill="#ffd867"/><rect x="3.3" y="6.5" width="5.7" height="2.5" fill="#2e8fd6"/></svg>
<div class="a" style="left:319.5px;top:428.6px;width:20.5px;height:1.4px;background:#76b9ed"></div>
<svg style="left:348px;top:414px" width="12.5" height="12.5" viewBox="0 0 12 12"><circle cx="6" cy="6" r="6" fill="#1b9de2"/><path d="M0.2 6A6 6 0 0 1 11.8 5.2C11 3 8.5 2.6 6.5 3.6 4 5 4 8.5 7 9.6 9 10.3 10.5 9.7 11.4 9A6 6 0 0 1 0.2 6z" fill="#37c36f"/><path d="M4.5 7.5C4.5 5.2 6.5 4 8.3 4.5 10 5 10.2 6.6 9.2 6.8H5.5" fill="#0c59a4"/></svg>
<div class="a" style="left:367px;top:409.8px;width:24.3px;height:20.2px;background:#3d4e5b"></div>
<svg style="left:373.8px;top:414px" width="10.4" height="12" viewBox="0 0 10.4 12"><rect x="7.2" y="0" width="3.2" height="12" rx="0.5" fill="#f2c811"/><rect x="3.6" y="3" width="3.4" height="9" rx="0.5" fill="#e8b00e"/><rect x="0" y="6.5" width="3.4" height="5.5" rx="0.5" fill="#c99a06"/></svg>
<div class="a" style="left:367px;top:428.6px;width:24.3px;height:1.4px;background:#76b9ed"></div>
<svg style="left:397.8px;top:414px" width="12.2" height="12" viewBox="0 0 12.2 12"><rect x="3" y="0" width="9.2" height="12" rx="0.8" fill="#2b7cd3"/><rect x="3" y="4" width="9.2" height="4" fill="#185abd"/><rect x="0" y="2.5" width="6.5" height="7" rx="0.6" fill="#185abd"/><text x="0.6" y="8" font-family="Liberation Sans" font-weight="bold" font-size="5.3" fill="#fff">W</text></svg>
<div class="a" style="left:396px;top:428.6px;width:18px;height:1.4px;background:#76b9ed"></div>
<svg style="left:567.6px;top:417px" width="8.5" height="5" viewBox="0 0 8.5 5"><rect x="0" y="0.5" width="8.5" height="4.5" fill="#8f99a0"/><path d="M1 2h6.5 M1 3.5h6.5" stroke="#1c2c3a" stroke-width="0.4"/></svg>
<svg style="left:585.8px;top:415px" width="13.2" height="11.2" viewBox="0 0 13.2 11.2"><circle cx="8.9" cy="3.4" r="3" fill="#f7a21b"/><path d="M2.2 10.8C0.6 10.8 0 9.6 0.4 8.5 0.8 7.6 1.6 7.2 2.3 7.3 2.6 5.3 4.4 4 6.3 4.3 7.8 4.5 8.9 5.5 9.3 6.8 11 6.6 12.6 7.6 12.6 9 12.6 10.1 11.8 10.8 10.8 10.8z" fill="#cfe0f3"/></svg>
<div class="t" style="left:602.00px;top:417.07px;font-size:7.0px;color:#ffffff;transform:scaleX(0.9526);">19°C</div>
<div class="t" style="left:622.00px;top:417.07px;font-size:7.0px;color:#ffffff;transform:scaleX(1.0280);">Mayorm. nubl...</div>
<svg style="left:683.6px;top:416.8px" width="7" height="4" viewBox="0 0 7 4"><path d="M0.4 3.6L3.5 0.5 6.6 3.6" fill="none" stroke="#fff" stroke-width="0.8"/></svg>
<svg style="left:694.8px;top:416.5px" width="8.5" height="5" viewBox="0 0 8.5 5"><path d="M1.5 5C0 5 0 2.8 1.5 2.8 1.8 1 4 0.3 5.2 1.6 7 1.2 8.5 2.5 8 5z" fill="#3a96dd"/></svg>
<div class="t" style="left:716.30px;top:413.21px;font-size:6.6px;color:#ffffff;transform:scaleX(0.8416);">12:18</div>
<div class="t" style="left:707.70px;top:421.81px;font-size:6.6px;color:#ffffff;transform:scaleX(0.9329);">03/06/2023</div>
<svg style="left:747.6px;top:415.8px" width="12" height="12" viewBox="0 0 12 12"><path d="M0.2 0.2h8.2v6.8H4.4L2.4 8.6V7H0.2z" fill="#f2f2f2"/><path d="M1.4 1.9h6 M1.4 3.5h6 M1.4 5.1h4" stroke="#8a8886" stroke-width="0.6"/><circle cx="8" cy="7.8" r="3.4" fill="#1a1a1a" stroke="#d0d0d0" stroke-width="0.5"/><path d="M6.9 6.8C7 6 8.9 5.8 9 6.9 9.1 7.8 7 8.4 6.8 9.5H9.2" fill="none" stroke="#fff" stroke-width="0.75"/></svg>
<div class="a" style="left:764.6px;top:409.8px;width:0.7px;height:20.2px;background:#6c7680"></div>
</div></body></html>
